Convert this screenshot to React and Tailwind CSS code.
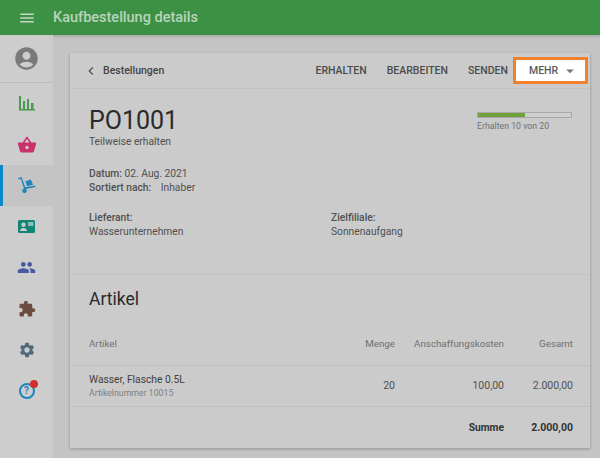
import React from 'react';
import { MdAccountCircle, MdMenu, MdChevronLeft, MdArrowDropDown, MdShoppingBasket, MdPeople, MdExtension, MdSettings } from 'react-icons/md';

const ChartIcon = () => (
  <svg width="16" height="15" viewBox="0 0 16 15" fill="#4a9a50">
    <path d="M0 0h2v13H0zM4 5h2v8H4zM8 3h2v10H8zM12 7h2.500v6H12zM0 13h16v1.500H0z" />
  </svg>
);

const DollyIcon = () => (
  <svg width="18" height="17" viewBox="0 0 18 17" fill="#1f86bd">
    <path d="M0 1.200 3.500 0l3.700 10.300 9.800-1.800.4 1.400-9.600 2a2.300 2.300 0 1 1-1.800-.3L2.700 1.800.4 2.500z" />
    <path d="m7.500 4.200 5.300-1.700 2.200 5.200-6 1.500z" />
  </svg>
);

const CardIcon = () => (
  <svg width="17" height="13" viewBox="0 0 17 13">
    <rect width="17" height="13" rx="1.500" fill="#0f8575" />
    <circle cx="5.500" cy="4.800" r="2.200" fill="#cbcbcb" />
    <path d="M2 11c0-2 1.700-3 3.500-3S9 9 9 11z" fill="#cbcbcb" />
    <rect x="10" y="2" width="5.500" height="4" fill="#8dbcb4" />
  </svg>
);

const HelpIcon = () => (
  <span className="relative flex h-[16px] w-[16px] items-center justify-center rounded-full border-2 border-[#1f86bd] text-[10px] font-bold leading-none text-[#1f86bd]">
    ?
    <span className="absolute -right-[5px] -top-[5px] h-[8px] w-[8px] rounded-full bg-[#d32f2f]" />
  </span>
);

const navItems = [
  { icon: <ChartIcon /> },
  { icon: <MdShoppingBasket size={20} color="#c9316b" /> },
  { icon: <DollyIcon />, active: true },
  { icon: <CardIcon /> },
  { icon: <MdPeople size={19} color="#4a5aa0" /> },
  { icon: <MdExtension size={18} color="#6d4c41" /> },
  { icon: <MdSettings size={18} color="#4f6a78" /> },
  { icon: <HelpIcon /> },
];

const Sidebar = () => (
  <aside className="w-[53px] shrink-0 bg-[#cdcdcd]">
    <div className="flex h-[48px] items-center justify-center border-b border-[#bcbcbc]">
      <MdAccountCircle size={27} color="#7a7a7a" />
    </div>
    <div>
      {navItems.map((item, i) => (
        <div
          key={i}
          className={`flex h-[41px] items-center justify-center ${
            item.active ? 'border-l-[3px] border-[#0a88c8] bg-[#c4c4c4] pr-[3px]' : ''
          }`}
        >
          {item.icon}
        </div>
      ))}
    </div>
  </aside>
);

const Toolbar = () => (
  <div className="flex h-[36px] items-center justify-between border-b border-[#c3c3c3] pl-[13px] pr-[2px]">
    <div className="flex items-center gap-[4px] text-[10.500px] font-medium text-[#444]">
      <MdChevronLeft size={16} color="#555" />
      Bestellungen
    </div>
    <div className="flex items-center text-[10.500px] font-medium text-[#4c4c4c]">
      <span className="mr-[20px]">ERHALTEN</span>
      <span className="mr-[20px]">BEARBEITEN</span>
      <span className="mr-[5px]">SENDEN</span>
      <button className="flex h-[27px] w-[75px] items-center gap-[3px] border-[3px] border-[#f07f2e] bg-white pl-[13px] text-[10.500px] font-medium text-[#5a5a5a]">
        MEHR
        <MdArrowDropDown size={18} color="#777" />
      </button>
    </div>
  </div>
);

const Summary = () => (
  <div className="h-[186px] border-b border-[#c3c3c3] pl-[19px] pr-[17px] pt-[17px]">
    <div className="flex justify-between">
      <div>
        <div className="text-[25px] leading-[30px] text-[#2a2a2a]">PO1001</div>
        <div className="-mt-[1px] text-[10.250px] leading-[14px] text-[#505050]">Teilweise erhalten</div>
      </div>
      <div className="mt-[6px] w-[96px]">
        <div className="h-[6px] w-[95px] border border-[#a8a8a8] bg-[#cfcfcf]">
          <div className="h-full w-1/2 bg-[#72a03a]" />
        </div>
        <div className="mt-[2px] text-[8.750px] leading-[12px] text-[#707070]">Erhalten 10 von 20</div>
      </div>
    </div>
    <div className="mt-[18px] text-[10.250px] leading-[14px] text-[#505050]">
      <div><span className="font-medium">Datum:</span> 02. Aug. 2021</div>
      <div><span className="mr-[7px] font-medium">Sortiert nach:</span> Inhaber</div>
    </div>
    <div className="mt-[16px] flex text-[10.250px] leading-[14px] text-[#505050]">
      <div className="w-[242px]">
        <div className="font-medium">Lieferant:</div>
        <div>Wasserunternehmen</div>
      </div>
      <div>
        <div className="font-medium">Zielfiliale:</div>
        <div>Sonnenaufgang</div>
      </div>
    </div>
  </div>
);

const Articles = () => (
  <div>
    <div className="pl-[19px] pt-[13px] text-[17.500px] leading-[22px] text-[#2a2a2a]">Artikel</div>
    <div className="mt-[12px] flex h-[44px] items-center border-b border-[#c0c0c0] pl-[19px] pr-[17px] pt-[2px] text-[9.750px] text-[#707070]">
      <div className="flex-1">Artikel</div>
      <div className="w-[60px] text-right">Menge</div>
      <div className="w-[109px] text-right">Anschaffungskosten</div>
      <div className="w-[69px] text-right">Gesamt</div>
    </div>
    <div className="flex h-[41px] items-center border-b border-[#c0c0c0] pl-[19px] pr-[17px]">
      <div className="flex-1">
        <div className="text-[10.250px] leading-[14px] text-[#404040]">Wasser, Flasche 0.5L</div>
        <div className="text-[8.750px] leading-[13px] text-[#808080]">Artikelnummer 10015</div>
      </div>
      <div className="w-[60px] text-right text-[10.500px] text-[#505050]">20</div>
      <div className="w-[109px] text-right text-[10.500px] text-[#505050]">100,00</div>
      <div className="w-[69px] text-right text-[10.500px] text-[#505050]">2.000,00</div>
    </div>
    <div className="flex h-[41px] items-center justify-end pl-[19px] pr-[17px] font-bold text-[#333]">
      <div className="text-[10.250px]">Summe</div>
      <div className="w-[69px] text-right text-[10.500px]">2.000,00</div>
    </div>
  </div>
);

export default function App() {
  return (
    <div className="flex h-[458px] w-[600px] flex-col overflow-hidden bg-[#c4c4c4] font-['Roboto',sans-serif]">
      <header className="flex h-[35px] shrink-0 items-center bg-[#3d9144] shadow-[0_1px_3px_rgba(0,0,0,0.2)]">
        <div className="flex w-[53px] justify-center">
          <MdMenu size={18} color="#c4d9c5" />
        </div>
        <div className="text-[14.500px] font-medium text-[#b9d4bb]">Kaufbestellung details</div>
      </header>
      <div className="flex flex-1">
        <Sidebar />
        <main className="flex-1 pl-[17px] pr-[10px] pt-[18px]">
          <div className="h-[395px] bg-[#cbcbcb] shadow-[0_1px_3px_rgba(0,0,0,0.25)]">
            <Toolbar />
            <Summary />
            <Articles />
          </div>
        </main>
      </div>
    </div>
  );
}
